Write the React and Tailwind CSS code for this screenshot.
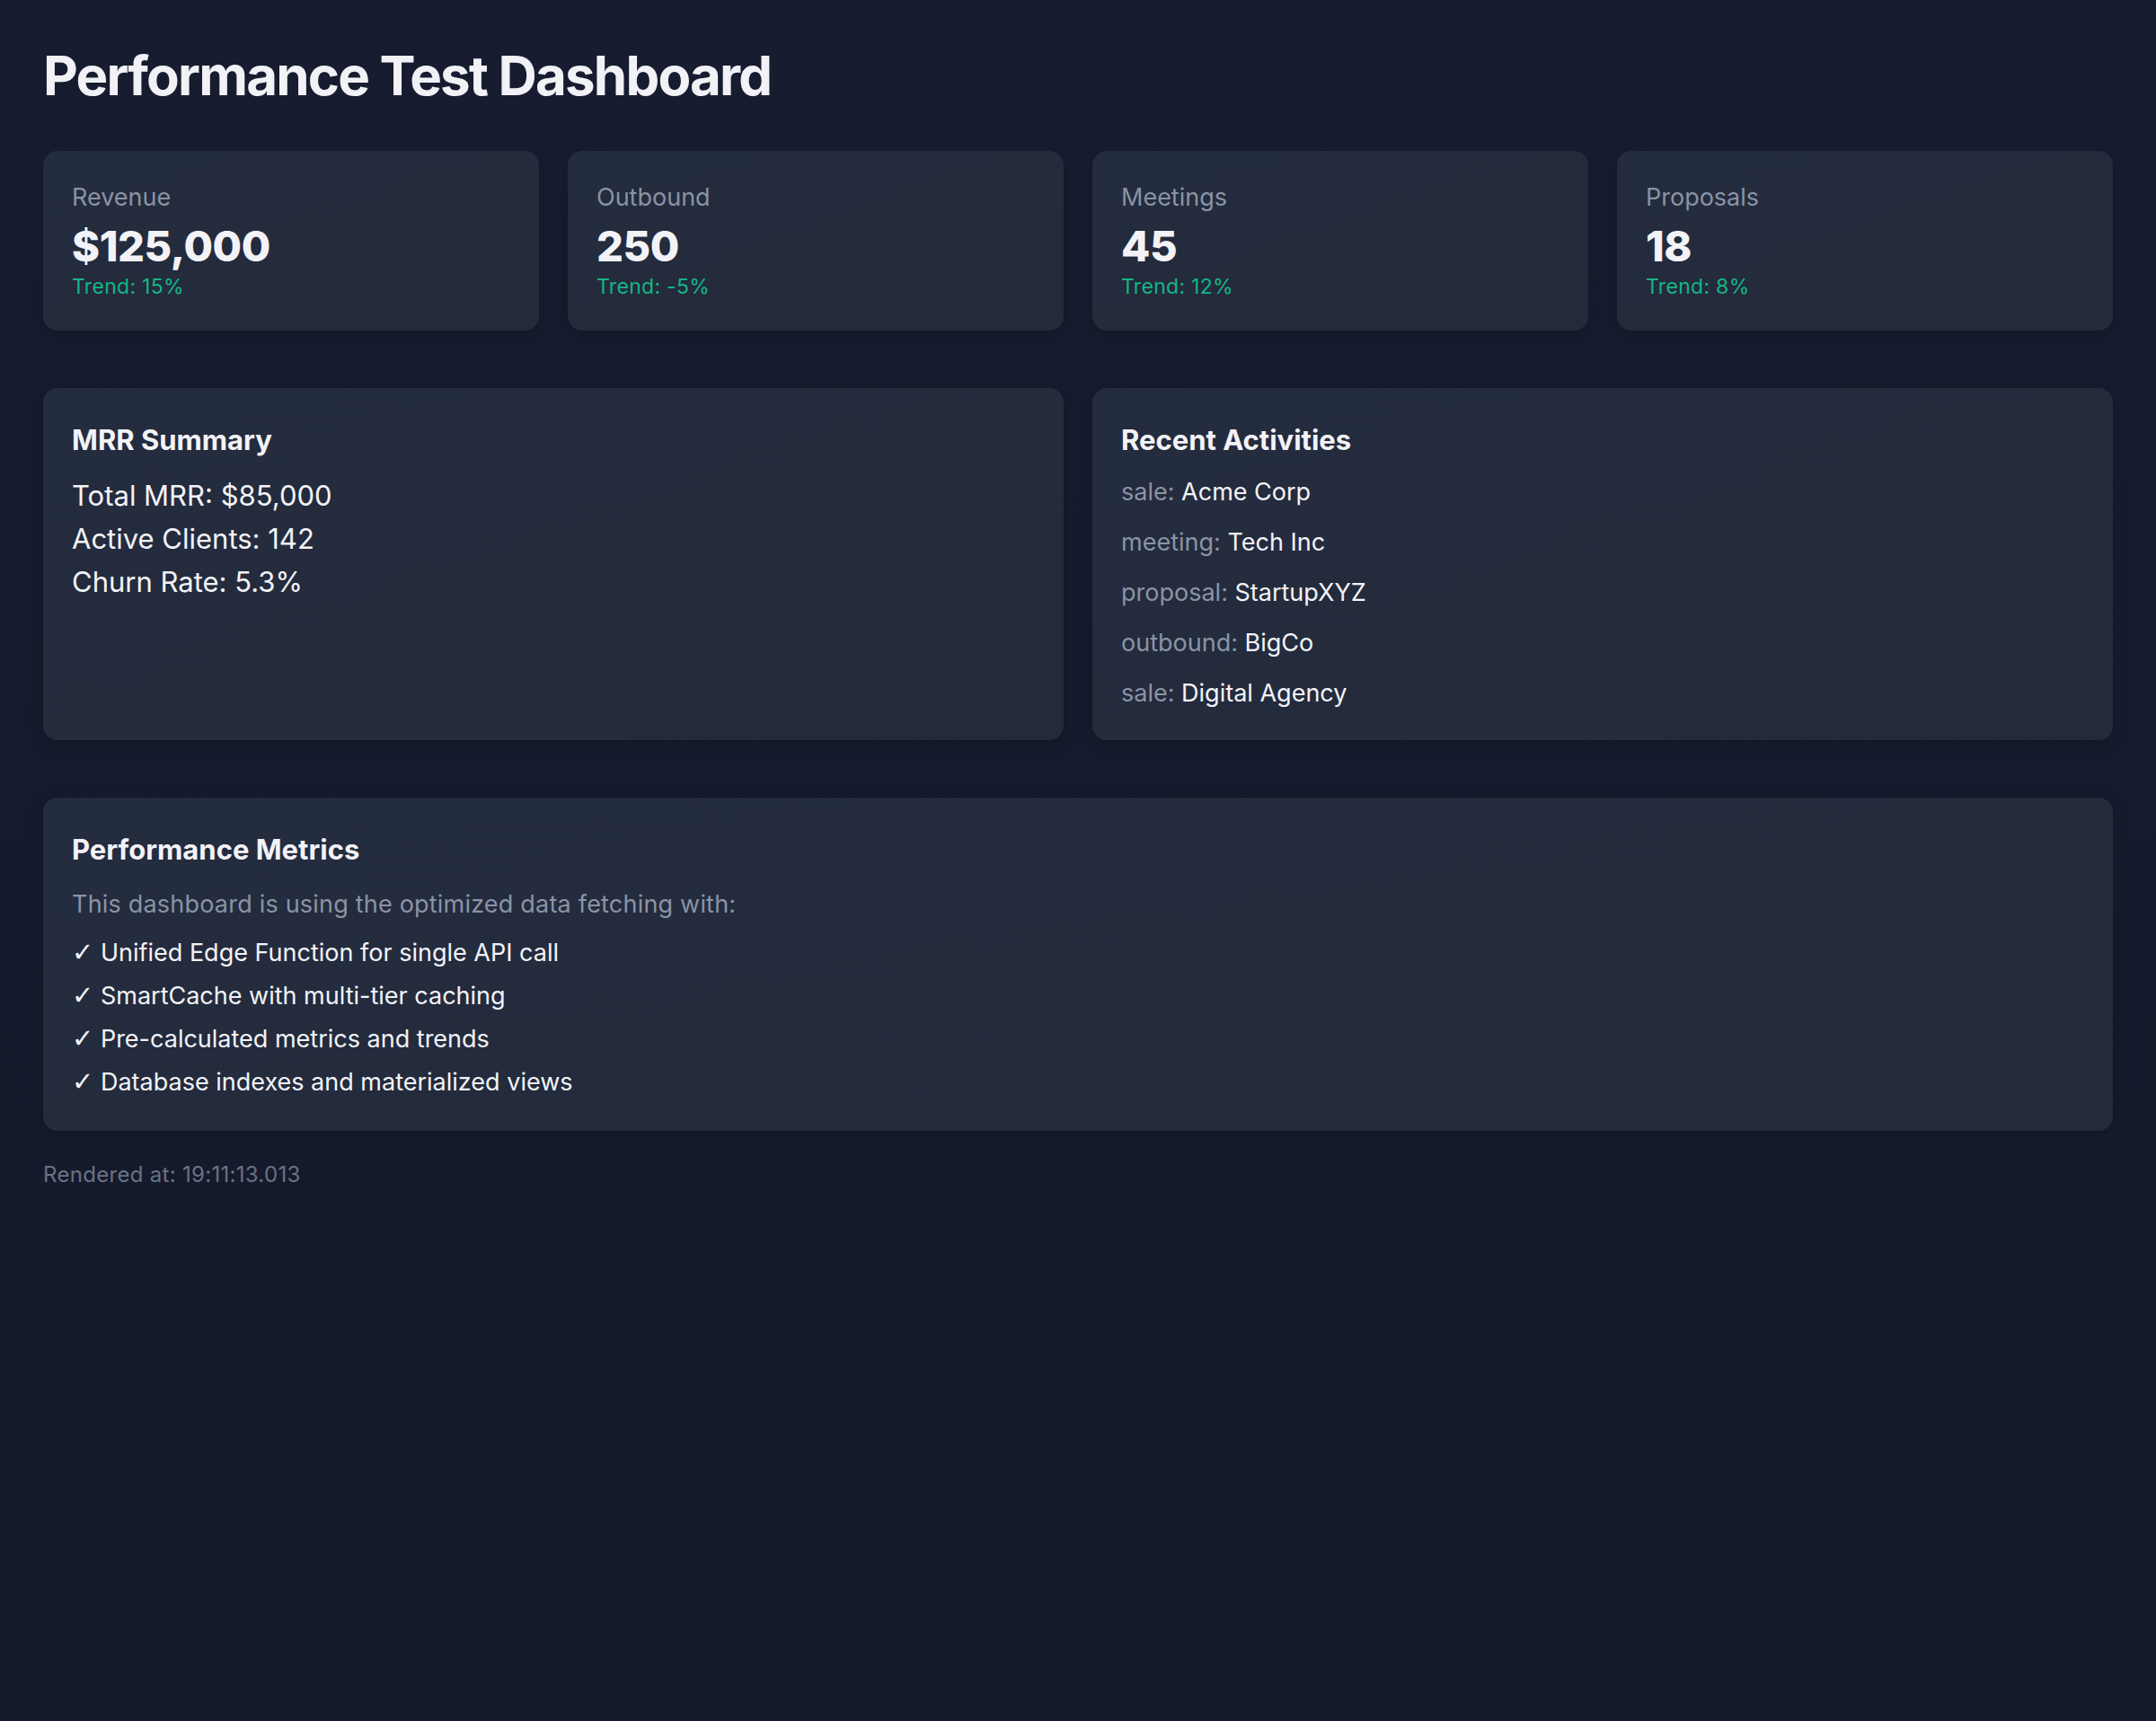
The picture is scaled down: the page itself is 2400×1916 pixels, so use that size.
import React from "react";

const stats = [
  { label: "Revenue", value: "$125,000", trend: "Trend: 15%" },
  { label: "Outbound", value: "250", trend: "Trend: -5%" },
  { label: "Meetings", value: "45", trend: "Trend: 12%" },
  { label: "Proposals", value: "18", trend: "Trend: 8%" },
];

const activities = [
  ["sale", "Acme Corp"],
  ["meeting", "Tech Inc"],
  ["proposal", "StartupXYZ"],
  ["outbound", "BigCo"],
  ["sale", "Digital Agency"],
];

const checks = [
  "Unified Edge Function for single API call",
  "SmartCache with multi-tier caching",
  "Pre-calculated metrics and trends",
  "Database indexes and materialized views",
];

const card =
  "rounded-[16px] bg-gradient-to-br from-[#242c3f] to-[#222a3b] shadow-[0_4px_16px_rgba(0,0,0,0.18)]";

export default function App() {
  return (
    <div
      className="min-h-screen bg-gradient-to-b from-[#171c30] to-[#131a2b] px-[48px] pt-[48px] pb-[48px] text-[#f1f2f6]"
      style={{ fontFamily: "Inter, 'Noto Sans', 'Liberation Sans', sans-serif" }}
    >
      <h1 className="text-[60px] font-bold leading-[72px] tracking-[-1.8px] text-[#f1f1f6]">
        Performance Test Dashboard
      </h1>

      <div className="mt-[48px] grid grid-cols-4 gap-[32px]">
        {stats.map((s) => (
          <div key={s.label} className={`${card} p-[32px]`}>
            <div className="text-[27px] leading-[40px] text-[#8b93a5]">{s.label}</div>
            <div className="mt-[7px] text-[47px] font-extrabold leading-[54px] tracking-[-0.4px] text-[#f3f3f7]">
              {s.value}
            </div>
            <div className="mt-[2px] text-[23px] leading-[33px] tracking-[0.3px] text-[#17b584]">
              {s.trend}
            </div>
          </div>
        ))}
      </div>

      <div className="mt-[64px] grid grid-cols-2 gap-[32px]">
        <div className={`${card} p-[32px]`}>
          <h2 className="pt-[3px] text-[31px] font-bold leading-[45px] text-[#f3f3f7]">MRR Summary</h2>
          <div className="mt-[16px] text-[31px] leading-[48px] text-[#f3f3f7]">
            <p>Total MRR: $85,000</p>
            <p>Active Clients: 142</p>
            <p>Churn Rate: 5.3%</p>
          </div>
        </div>
        <div className={`${card} p-[32px]`}>
          <h2 className="pt-[3px] text-[31px] font-bold leading-[45px] text-[#f3f3f7]">Recent Activities</h2>
          <div className="mt-[16px] flex flex-col gap-[16px]">
            {activities.map(([k, v], i) => (
              <div key={i} className="text-[27px] leading-[40px]">
                <span className="text-[#8b93a5]">{k}:</span>{" "}
                <span className="text-[#f3f3f7]">{v}</span>
              </div>
            ))}
          </div>
        </div>
      </div>

      <div className={`${card} mt-[64px] px-[32px] pt-[32px] pb-[30px]`}>
        <h2 className="pt-[3px] text-[31px] font-bold leading-[45px] text-[#f3f3f7]">Performance Metrics</h2>
        <p className="mt-[19px] text-[27px] leading-[40px] tracking-[0.2px] text-[#8b93a5]">
          This dashboard is using the optimized data fetching with:
        </p>
        <div className="mt-[10px] text-[27px] leading-[48px] text-[#f3f3f7]">
          {checks.map((c) => (
            <p key={c}>
              <span
                style={{ fontFamily: "'DejaVu Sans', sans-serif" }}
                className="text-[29px] leading-none"
              >
                ✓
              </span>{" "}
              {c}
            </p>
          ))}
        </div>
      </div>

      <p className="mt-[31px] text-[24px] leading-[36px] tracking-[0.3px] text-[#6b7282]">
        Rendered at: 19:11:13.013
      </p>
    </div>
  );
}
